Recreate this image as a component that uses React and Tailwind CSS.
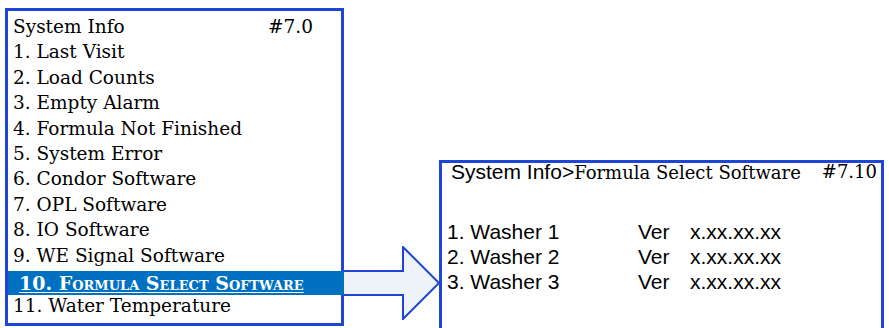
const serif = { fontFamily: '"DejaVu Serif", "Liberation Serif", serif' };

const items = [
  "1. Last Visit",
  "2. Load Counts",
  "3. Empty Alarm",
  "4. Formula Not Finished",
  "5. System Error",
  "6. Condor Software",
  "7. OPL Software",
  "8. IO Software",
  "9. WE Signal Software",
];

const washers = ["1. Washer 1", "2. Washer 2", "3. Washer 3"];

function Arrow() {
  return (
    <svg width="98" height="74" viewBox="0 0 98 74" className="mt-[246px] shrink-0 -ml-[1px]">
      <polygon points="0,25 60,25 60,1 96,37 60,73 60,49 0,49" fill="#eef2f9" />
      <polyline
        points="0,25 60,25 60,1 96,37 60,73 60,49 0,49"
        fill="none"
        stroke="#1f45d8"
        strokeWidth="2"
      />
    </svg>
  );
}

export default function App() {
  return (
    <div className="flex h-[328px] w-[889px] items-start overflow-hidden bg-white text-black">
      <div
        className="ml-[5px] mt-[8px] h-[318px] w-[339px] shrink-0 border-[3px] border-[#1f45d8] pt-[3px] text-[18.5px]"
        style={serif}
      >
        <div className="flex pl-[5px] pr-[28px] leading-[25.4px]">
          <span>System Info</span>
          <span className="ml-auto">#7.0</span>
        </div>
        {items.map((item) => (
          <div key={item} className="pl-[5px] leading-[25.4px]">
            {item}
          </div>
        ))}
        <div className="relative -mr-[3px] mt-[3px] h-[24px] overflow-hidden bg-[#0070c0] pl-[11px] text-[19px] font-bold leading-[24px] text-white underline underline-offset-2 [font-variant:small-caps]">
          10. Formula Select Software
        </div>
        <div className="pl-[5px] leading-[22px]">11. Water Temperature</div>
      </div>
      <Arrow />
      <div
        className="-ml-[2px] mt-[160px] h-[172px] w-[445px] shrink-0 border-[3px] border-[#1f45d8] pl-[5px] text-[21px]"
        style={{ fontFamily: '"Liberation Sans", Arial, sans-serif' }}
      >
        <div className="flex pl-[4px] pr-[4px] leading-[18px]">
          <span>
            System Info&gt;<span className="text-[18px]" style={serif}>Formula Select Software</span>
          </span>
          <span className="ml-auto text-[18px]" style={serif}>
            #7.10
          </span>
        </div>
        <div className="mt-[37px] grid grid-cols-[191px_52px_auto] leading-[25px]">
          {washers.map((w) => (
            <div key={w} className="contents">
              <span>{w}</span>
              <span>Ver</span>
              <span>x.xx.xx.xx</span>
            </div>
          ))}
        </div>
      </div>
    </div>
  );
}
